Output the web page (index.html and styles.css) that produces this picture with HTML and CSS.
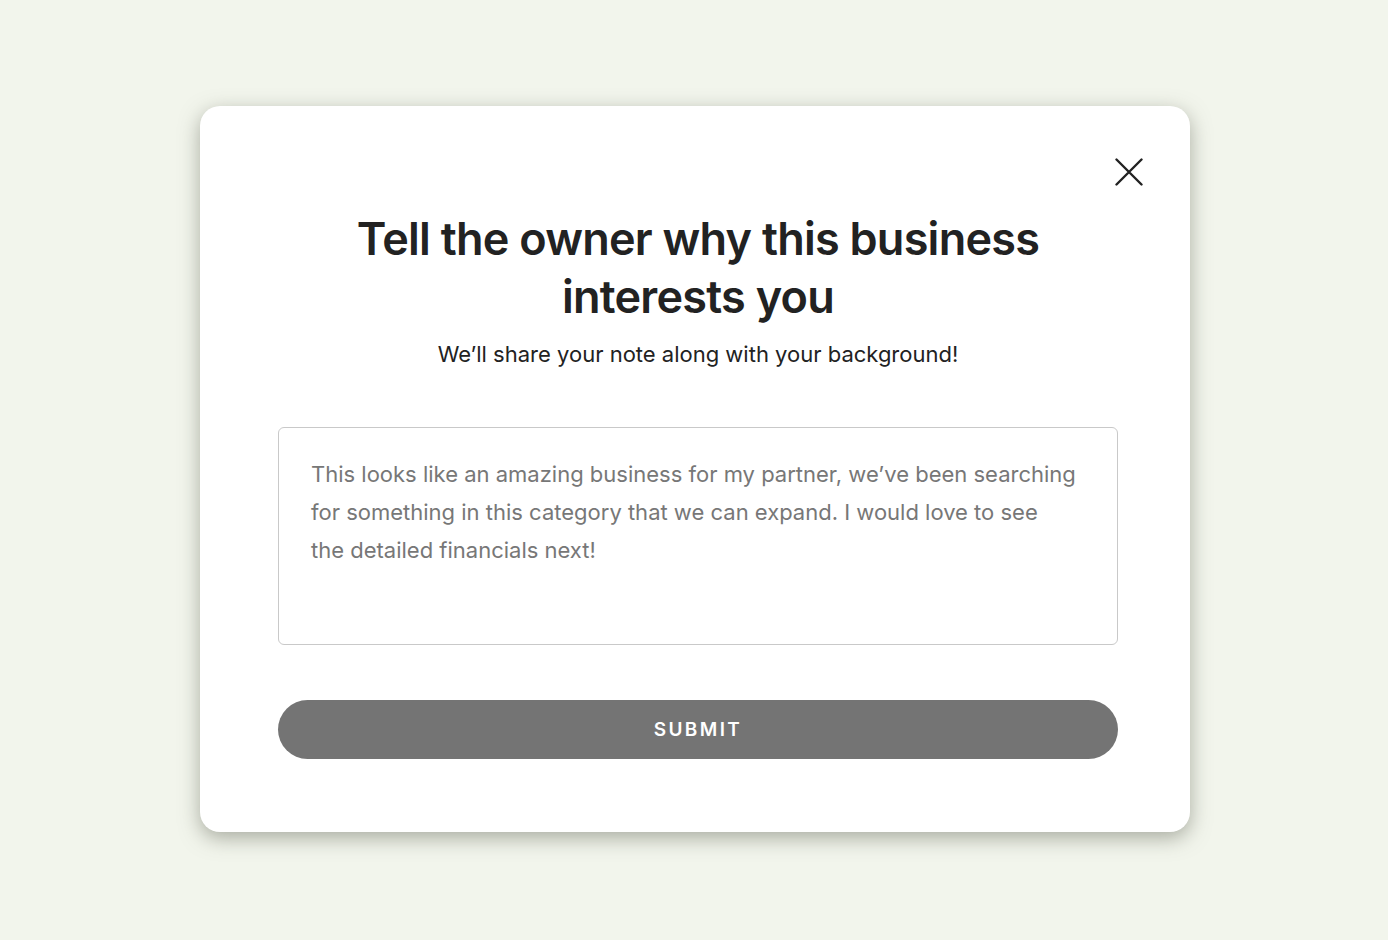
FILE: index.html
```html
<!DOCTYPE html>
<html lang="en">
<head>
<meta charset="utf-8">
<title>Tell the owner</title>
<link rel="stylesheet" href="styles.css">
</head>
<body>
<div class="page">
  <div class="modal">
    <button class="close" aria-label="Close">
      <svg width="28" height="28" viewBox="0 0 28 28"><path d="M1.5 1.5 L26.5 26.5 M26.5 1.5 L1.5 26.5" stroke="#222" stroke-width="2.4" fill="none" stroke-linecap="round"/></svg>
    </button>
    <h1 class="title">Tell the owner why this business<br>interests you</h1>
    <p class="subtitle">We’ll share your note along with your background!</p>
    <div class="note">This looks like an amazing business for my partner, we’ve been searching for something in this category that we can expand. I would love to see<br>the detailed financials next!</div>
    <button class="submit">SUBMIT</button>
  </div>
</div>
</body>
</html>
```

FILE: styles.css
```css
html, body {
  margin: 0;
  padding: 0;
}
body {
  background: #f2f5ec;
  font-family: Inter, "Liberation Sans", sans-serif;
  color: #222;
}
.page {
  display: flex;
  justify-content: center;
  align-items: flex-start;
  min-height: 100vh;
  box-sizing: border-box;
  padding-top: 106px;
  padding-left: 2px;
}
.modal {
  position: relative;
  width: 990px;
  box-sizing: border-box;
  height: 726px;
  background: #fff;
  border-radius: 20px;
  box-shadow: 0 6px 20px rgba(95, 100, 85, 0.5);
  padding: 104px 72px 0 78px;
  display: flex;
  flex-direction: column;
}
.close {
  position: absolute;
  top: 52px;
  right: 47px;
  width: 28px;
  height: 28px;
  padding: 0;
  border: 0;
  background: none;
  cursor: pointer;
}
.close svg { display: block; }
.title {
  margin: 0;
  text-align: center;
  font-size: 45px;
  line-height: 58px;
  font-weight: 600;
  letter-spacing: -0.75px;
  color: #222;
}
.subtitle {
  margin: 13px 0 0;
  text-align: center;
  font-size: 22px;
  line-height: 30px;
  font-weight: 400;
  letter-spacing: 0;
  color: #222;
}
.note {
  margin-top: 58px;
  height: 218px;
  box-sizing: border-box;
  border: 1.5px solid #c9c9c9;
  border-radius: 6px;
  padding: 27px 32px;
  font-size: 22px;
  line-height: 38px;
  color: #777;
  letter-spacing: 0;
}
.submit {
  margin-top: 55px;
  height: 59px;
  border: 0;
  border-radius: 30px;
  background: #747474;
  color: #fff;
  font-family: Inter, "Liberation Sans", sans-serif;
  font-size: 19px;
  font-weight: 600;
  letter-spacing: 2.4px;
  cursor: pointer;
}
```
